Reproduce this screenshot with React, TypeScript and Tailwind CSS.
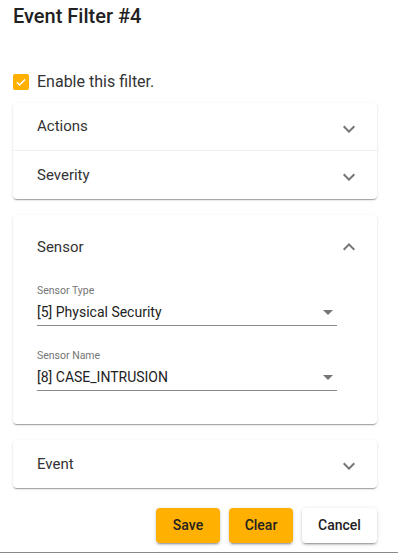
import React from "react";

const font = { fontFamily: "Roboto, 'Liberation Sans', sans-serif" };

function Chevron({ up }: { up?: boolean }) {
  return (
    <svg viewBox="0 0 24 24" className={"h-6 w-6 fill-[#757575] " + (up ? "rotate-180" : "")}>
      <path d="M16.59 8.59L12 13.17 7.41 8.59 6 10l6 6 6-6z" />
    </svg>
  );
}

function Row({ label, last }: { label: string; last?: boolean }) {
  return (
    <div className={"flex h-12 items-center justify-between pl-6 pr-4 " + (last ? "" : "border-b border-[#f0f0f0]")}>
      <span className="text-[15px] text-[#333]">{label}</span>
      <span className="mt-1"><Chevron /></span>
    </div>
  );
}

function Field({ label, value }: { label: string; value: string }) {
  return (
    <div className="w-[300px]">
      <div className="h-4 text-[10.5px] leading-4 text-[#757575]">{label}</div>
      <div className="flex h-[27px] items-center justify-between border-b border-[#8a8a8a]">
        <span className="text-[14px] text-[#222]">{value}</span>
        <svg viewBox="0 0 24 24" className="-mr-[3px] h-6 w-6 fill-[#757575]"><path d="M7 10l5 5 5-5z" /></svg>
      </div>
    </div>
  );
}

const card = "rounded bg-white shadow-[0_2px_1px_-1px_rgba(0,0,0,0.2),0_1px_1px_0_rgba(0,0,0,0.14),0_1px_3px_0_rgba(0,0,0,0.12)]";
const btn = "h-[35px] rounded text-[14px] font-medium text-[#222] shadow-[0_3px_1px_-2px_rgba(0,0,0,0.2),0_2px_2px_0_rgba(0,0,0,0.14),0_1px_5px_0_rgba(0,0,0,0.12)]";

export default function App() {
  return (
    <div style={font} className="h-[558px] w-[412px] overflow-hidden bg-white">
      <div className="w-[398px] border-b border-[#8a8a8a] pb-[9px]">
        <div className="px-[13px]">
          <h1 className="h-8 text-[20px] font-medium leading-8 text-[#222]">Event Filter #4</h1>
          <div className="mt-[34px] flex h-8 items-center gap-2">
            <span className="flex h-[16px] w-[16px] items-center justify-center rounded-[2px] bg-[#ffb000]">
              <svg viewBox="0 0 24 24" className="h-[14px] w-[14px] fill-none stroke-white stroke-[2.5]"><path d="M5 12.5l4.5 4.5L19 7.5" /></svg>
            </span>
            <span className="text-[16px] text-[#333]">Enable this filter.</span>
          </div>
          <div className="mt-[5px] w-[364px]">
            <div className={card}>
              <Row label="Actions" />
              <Row label="Severity" last />
            </div>
            <div className={card + " mt-4"}>
              <div className="flex h-16 items-center justify-between pl-6 pr-4">
                <span className="text-[15px] text-[#333]">Sensor</span>
                <Chevron up />
              </div>
              <div className="flex flex-col gap-[22px] pb-[33px] pl-6 pt-1">
                <Field label="Sensor Type" value="[5] Physical Security" />
                <Field label="Sensor Name" value="[8] CASE_INTRUSION" />
              </div>
            </div>
            <div className={card + " mt-4"}>
              <Row label="Event" last />
            </div>
            <div className="mt-[20px] flex justify-end gap-[9px]">
              <button className={btn + " w-16 bg-[#ffb000]"}>Save</button>
              <button className={btn + " w-16 bg-[#ffb000]"}>Clear</button>
              <button className={btn + " w-[75px] bg-white"}>Cancel</button>
            </div>
          </div>
        </div>
      </div>
    </div>
  );
}
